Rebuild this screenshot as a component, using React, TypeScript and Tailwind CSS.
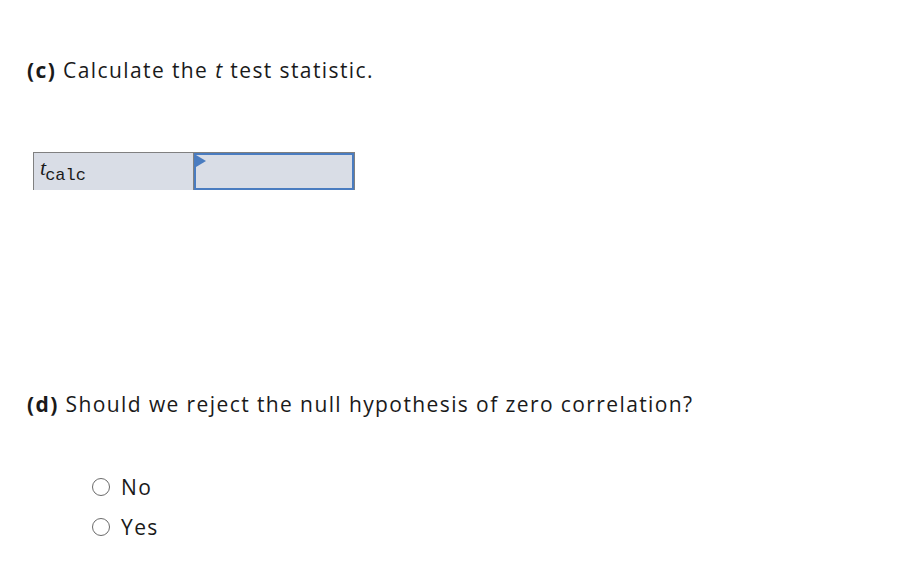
export default function App() {
  return (
    <div className="w-[918px] h-[576px] bg-white text-[#1a1a1a] font-['Open_Sans','Liberation_Sans',sans-serif]">
      <div className="pt-[56px] pl-[27px]">
        <p className="text-[21px] leading-[28px] tracking-[1.4px]">
          <span className="font-bold">(c)</span> Calculate the <i>t</i> test statistic.
        </p>

        <div className="mt-[68px] ml-[6px] flex w-[322px] h-[38px] border-t border-l border-r border-[#808080] bg-[#d9dde6]">
          <div className="w-[160px] border-r border-[#808080] pl-[6px] flex items-start leading-none">
            <i className="font-['Liberation_Serif',serif] text-[22px] mt-[4px]">t</i>
            <span className="font-['Liberation_Mono',monospace] text-[17px] mt-[14px] -ml-[1px]">calc</span>
          </div>
          <div className="relative flex-1 border-2 border-[#4a7cc0]">
            <svg className="absolute left-0 top-0" width="10" height="12" viewBox="0 0 10 12">
              <polygon points="0,0 10,6 0,12" fill="#4a7cc0" />
            </svg>
          </div>
        </div>

        <p className="mt-[200px] text-[21px] leading-[28px] tracking-[1.4px]">
          <span className="font-bold">(d)</span> Should we reject the null hypothesis of zero correlation?
        </p>

        <div className="mt-[55px] ml-[65px] flex flex-col gap-[12px]">
          {['No', 'Yes'].map((o) => (
            <label key={o} className="flex items-center gap-[11px] text-[21px] leading-[28px] tracking-[1.4px]">
              <span className="w-[18px] h-[18px] rounded-full border-[1.5px] border-[#6b6b6b] bg-white" />
              {o}
            </label>
          ))}
        </div>
      </div>
    </div>
  );
}
